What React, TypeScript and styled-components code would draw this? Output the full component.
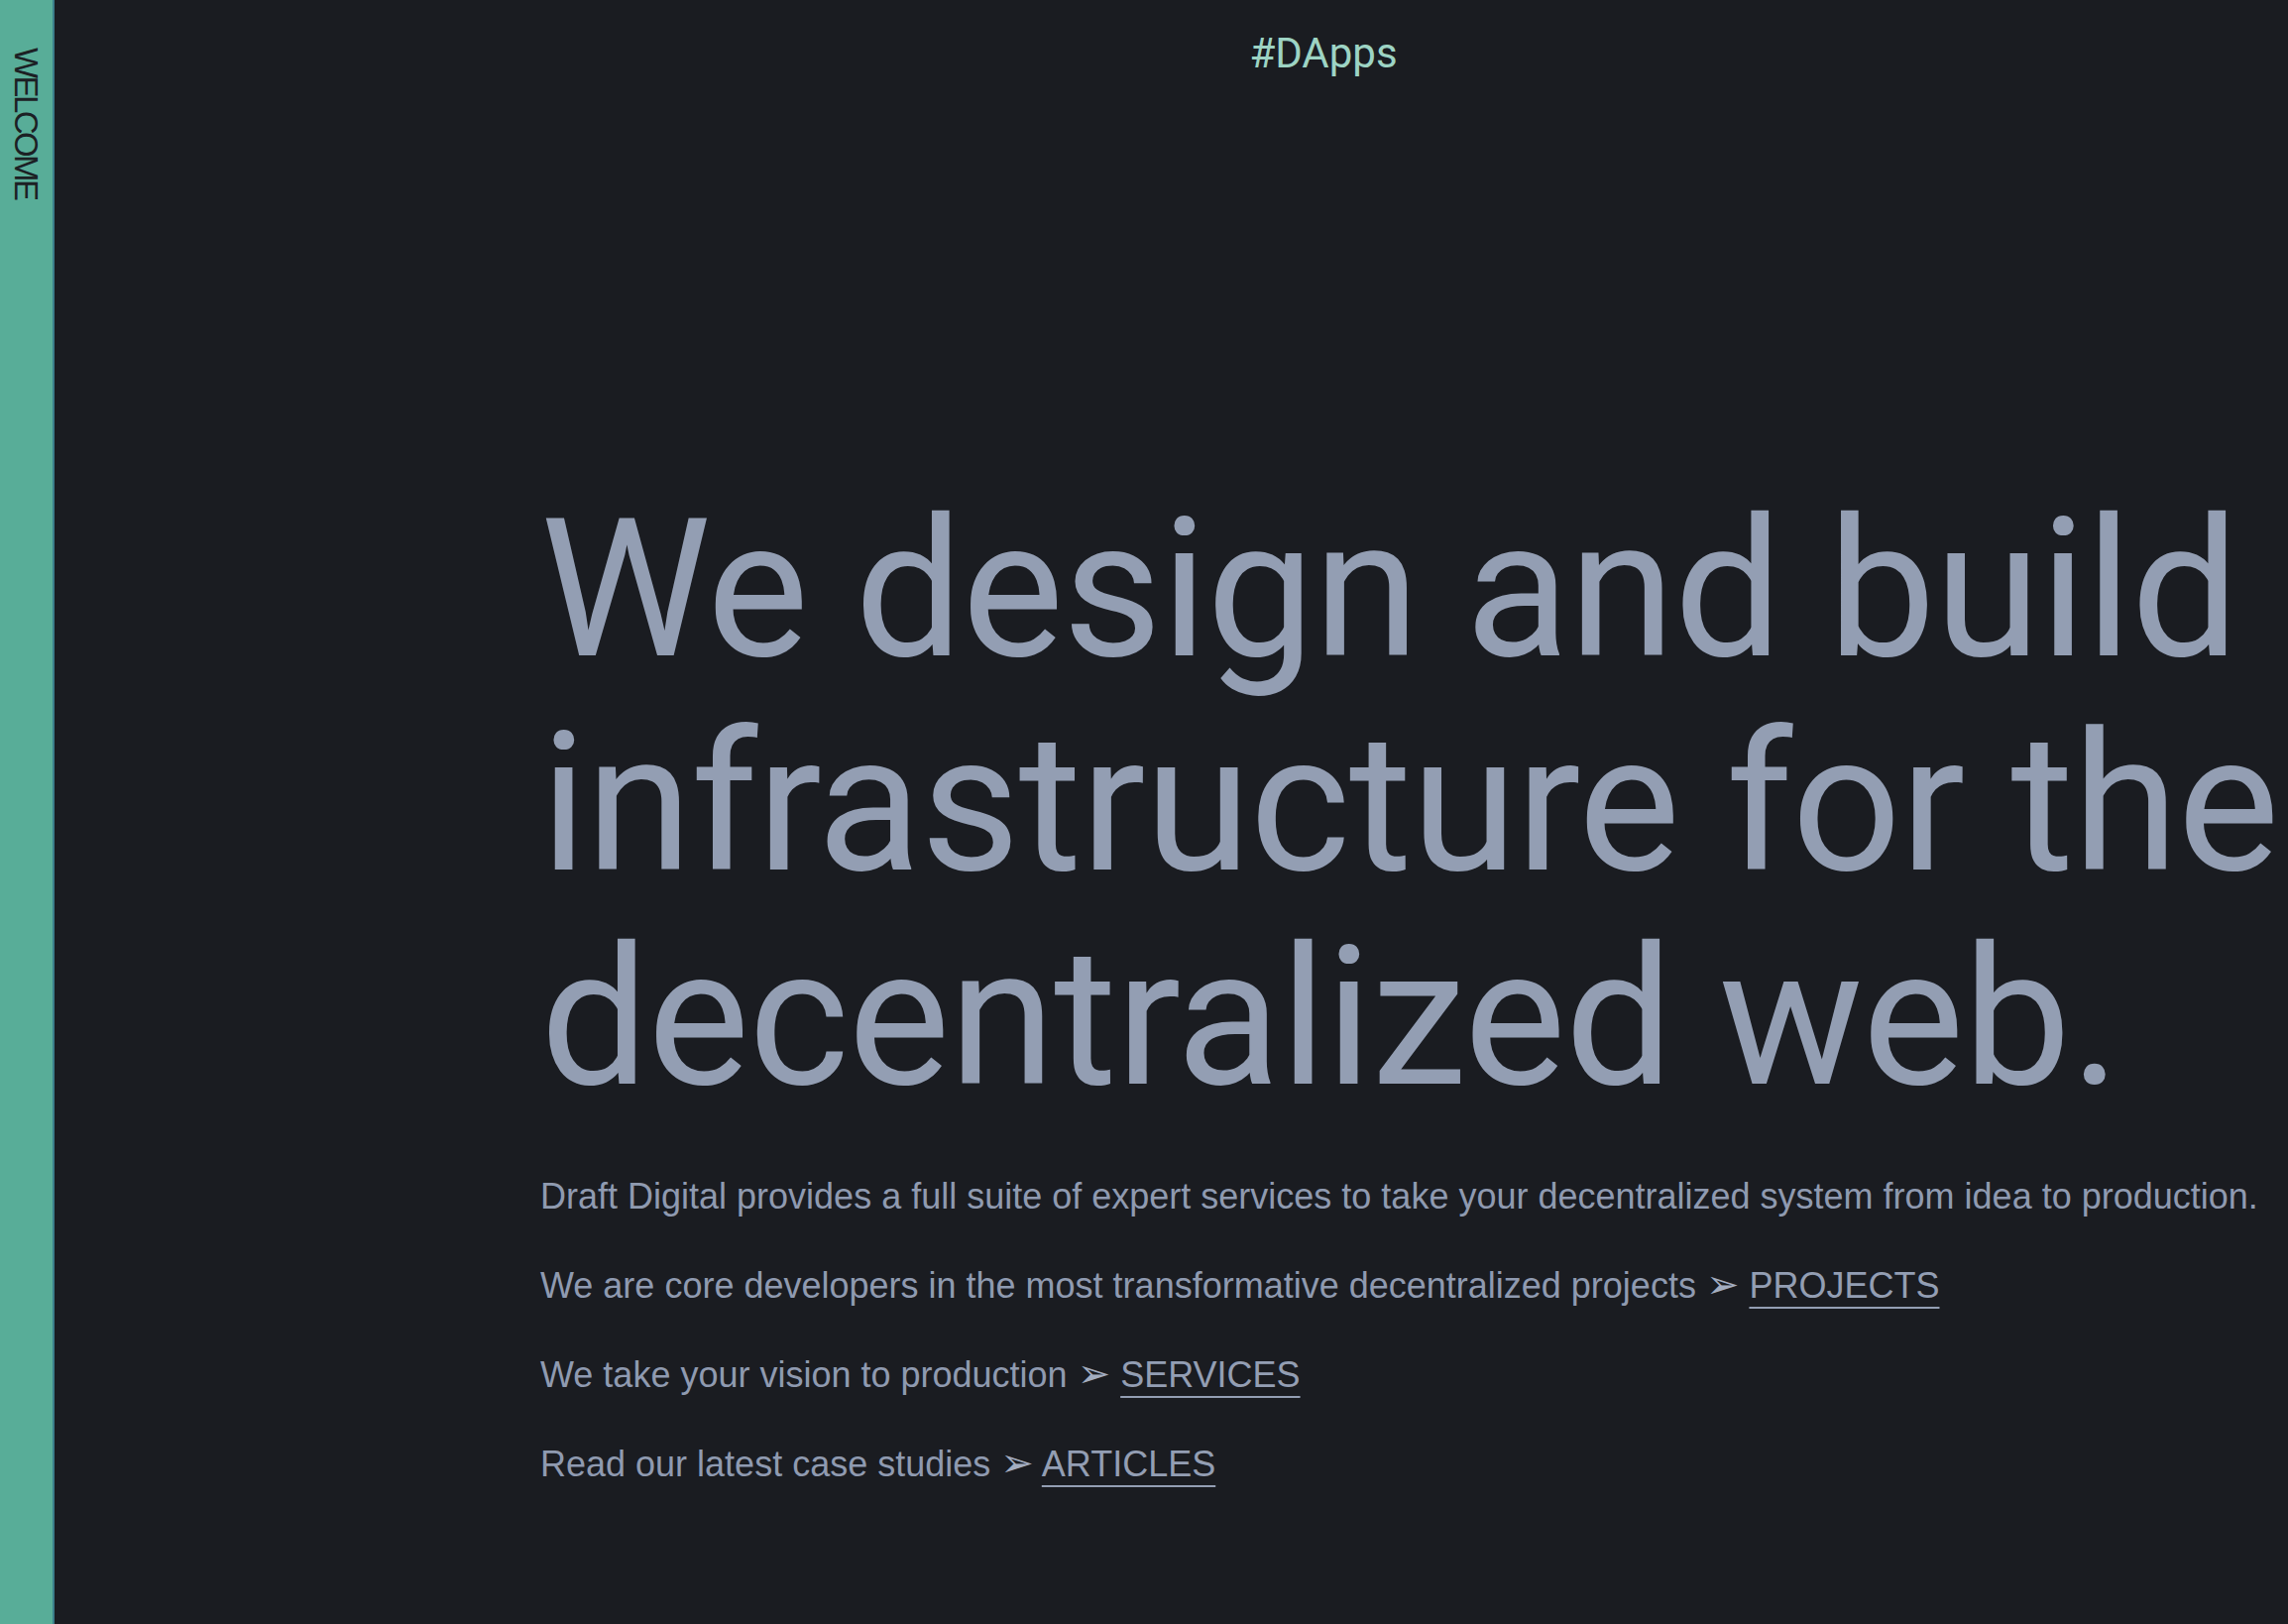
import styled, { createGlobalStyle } from 'styled-components';

const GlobalStyle = createGlobalStyle`
  html, body {
    margin: 0;
    padding: 0;
    overflow: hidden;
    background: #1a1c21;
  }
`;

const Page = styled.div`
  display: flex;
  width: 100vw;
  height: 100vh;
  background: #1a1c21;
  overflow: hidden;
`;

const Sidebar = styled.aside`
  flex: 0 0 53px;
  background: #58ad98;
  border-right: 2px solid #3b7f8b;
  display: flex;
  justify-content: center;
  padding-top: 48px;
  box-sizing: content-box;
`;

const SideLabel = styled.span`
  writing-mode: vertical-rl;
  font-family: "Liberation Sans", Arial, sans-serif;
  font-size: 33px;
  letter-spacing: -2.6px;
  line-height: 1;
  color: #1c2024;
`;

const Main = styled.main`
  flex: 1;
  padding-left: 490px;
  min-width: 0;
`;

const Column = styled.div`
  width: 1580px;
  display: flex;
  flex-direction: column;
`;

const Header = styled.header`
  padding-top: 29px;
  text-align: center;
  font-family: Roboto, "Noto Sans", sans-serif;
  font-size: 42px;
  line-height: 49px;
  color: #9dd4c4;
`;

const Headline = styled.h1`
  margin: 409px 0 0;
  font-family: Roboto, "Noto Sans", sans-serif;
  font-weight: 400;
  font-size: 194px;
  line-height: 216px;
  letter-spacing: -1.1px;
  color: #939eb3;
  white-space: nowrap;
`;

const Copy = styled.div`
  margin-top: 52px;
  display: flex;
  flex-direction: column;
  gap: 50px;
`;

const Line = styled.p`
  margin: 0;
  font-family: "Liberation Sans", Arial, sans-serif;
  font-size: 36px;
  line-height: 40px;
  color: #8f9ab0;
  white-space: nowrap;
`;

const Arrow = styled.span`
  font-family: "DejaVu Sans", sans-serif;
  font-size: 40px;
  line-height: 0;
  color: #a3adc0;
`;

const NavLink = styled.a`
  color: #939eb3;
  text-decoration: underline;
  text-decoration-thickness: 2px;
  text-underline-offset: 9px;
  cursor: pointer;
`;

const links = [
  { lead: 'We are core developers in the most transformative decentralized projects', label: 'PROJECTS' },
  { lead: 'We take your vision to production', label: 'SERVICES' },
  { lead: 'Read our latest case studies', label: 'ARTICLES' },
];

const App: React.FC = () => {
  return (
    <Page>
      <GlobalStyle />
      <Sidebar>
        <SideLabel>WELCOME</SideLabel>
      </Sidebar>
      <Main>
        <Column>
          <Header>#DApps</Header>
          <Headline>
            We design and build
            <br />
            infrastructure for the
            <br />
            decentralized web.
          </Headline>
          <Copy>
            <Line>
              Draft Digital provides a full suite of expert services to take your decentralized system from idea to production.
            </Line>
            {links.map((l) => (
              <Line key={l.label}>
                {l.lead} <Arrow>➢</Arrow> <NavLink>{l.label}</NavLink>
              </Line>
            ))}
          </Copy>
        </Column>
      </Main>
    </Page>
  );
};

export default App;
